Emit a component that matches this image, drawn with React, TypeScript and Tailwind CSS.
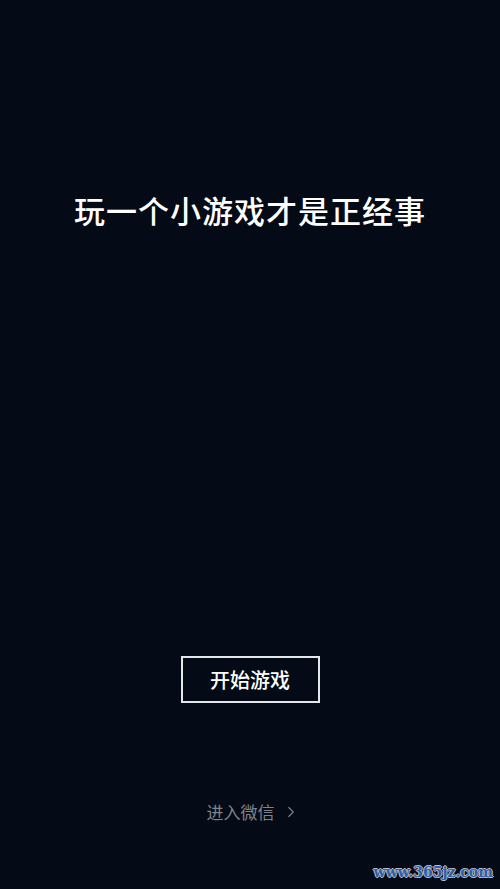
import { ChevronRight } from "lucide-react";

const FONT = '"Noto Sans CJK SC", "Noto Sans", sans-serif';

export default function App() {
  return (
    <div
      className="flex h-[889px] w-[500px] flex-col items-center bg-[#040a16]"
      style={{ fontFamily: FONT }}
    >
      <h1 className="mt-[190px] h-[40px] text-[31px] leading-[40px] font-medium tracking-[1px] text-white">
        玩一个小游戏才是正经事
      </h1>
      <button
        type="button"
        className="mt-[426px] flex h-[47px] w-[139px] items-center justify-center border-2 border-[#e6e7ea] text-[20px] font-medium text-white"
      >
        开始游戏
      </button>
      <div className="mt-[97px] flex h-[24px] items-center pl-[6px] text-[17px] leading-[24px] text-[#80838a]">
        <span>进入微信</span>
        <ChevronRight className="ml-[7px] h-[18px] w-[18px]" strokeWidth={1.5} />
      </div>
      <div className="mt-[39px] flex w-full justify-end pr-[7px]">
        <span
          className="text-[14px] leading-[18px] font-bold text-[#2f5fa8]"
          style={{
            fontFamily: '"DejaVu Serif", serif',
            textShadow:
              "1px 0 #b9bcc2, -1px 0 #b9bcc2, 0 1px #b9bcc2, 0 -1px #b9bcc2",
          }}
        >
          www.365jz.com
        </span>
      </div>
    </div>
  );
}
